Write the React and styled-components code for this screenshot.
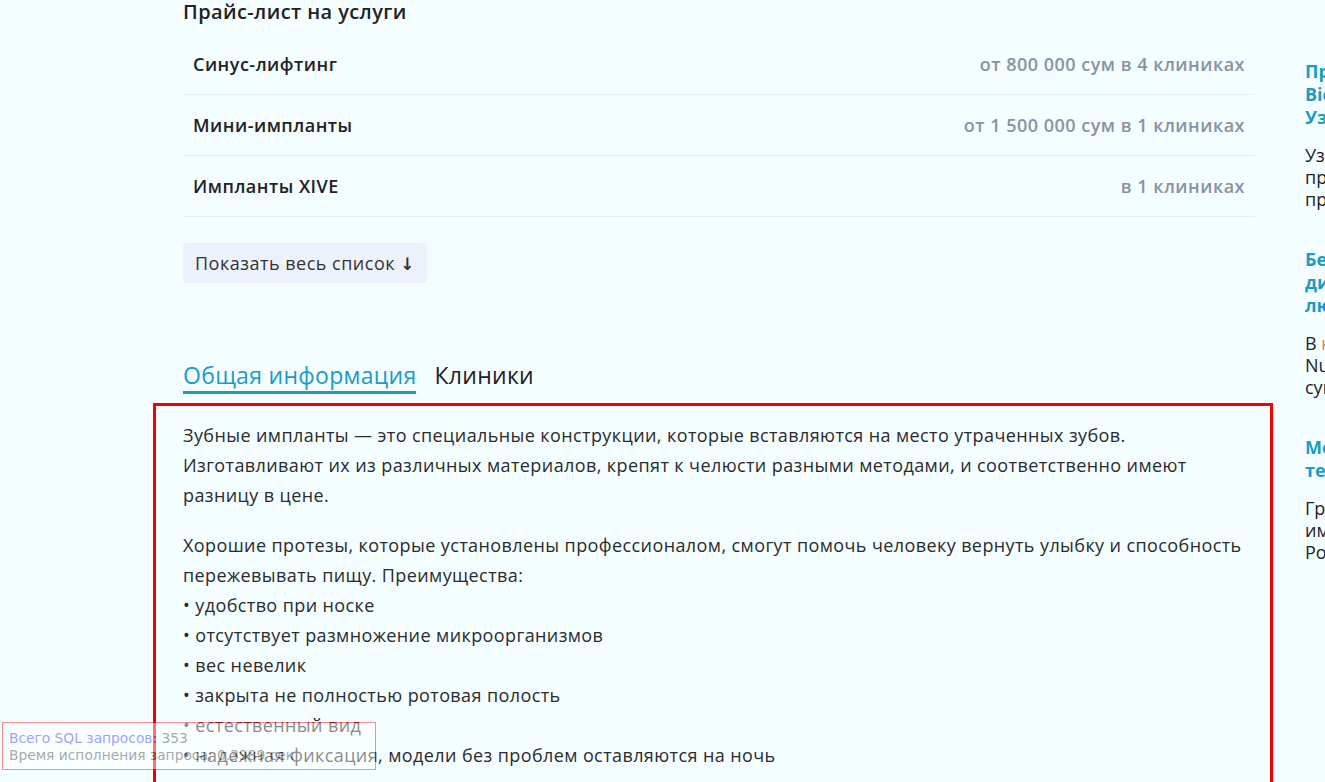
import React from "react";
import styled, { createGlobalStyle } from "styled-components";

const GlobalStyle = createGlobalStyle`
  html, body {
    margin: 0;
    padding: 0;
    background: #f4fdff;
    overflow: hidden;
  }
  body {
    font-family: "Open Sans", "Noto Sans", sans-serif;
    color: #2b2b2b;
  }
`;

const Page = styled.div`
  display: flex;
  align-items: flex-start;
  gap: 32px;
  padding-left: 153px;
  width: 1500px;
  height: 782px;
  overflow: hidden;
`;

const Main = styled.div`
  width: 1120px;
  flex-shrink: 0;
`;

const PriceSection = styled.section`
  margin-left: 30px;
  width: 1072px;
`;

const PriceTitle = styled.h2`
  margin: 0;
  height: 34px;
  font-size: 20px;
  font-weight: 600;
  line-height: 24px;
  letter-spacing: 0.4px;
  color: #222;
`;

const PriceRow = styled.div`
  display: flex;
  justify-content: space-between;
  align-items: center;
  padding: 0 10px 1px;
  box-sizing: border-box;
  height: 61px;
  border-bottom: 1px solid #e1f1f4;
  font-size: 18px;
  font-weight: 600;
  letter-spacing: 0.5px;
`;

const ServiceName = styled.span`
  color: #222;
`;

const ServicePrice = styled.span`
  color: #8993a0;
`;

const ShowAll = styled.button`
  margin-top: 26px;
  height: 40px;
  padding: 0 13px 0 12px;
  border: none;
  border-radius: 4px;
  background: #edf1fb;
  font-family: inherit;
  font-size: 18px;
  letter-spacing: 0.5px;
  color: #333;
  cursor: pointer;
`;

const Arrow = styled.span`
  font-family: "DejaVu Sans", sans-serif;
  font-size: 17px;
  font-weight: 700;
  letter-spacing: 0;
`;

const Tabs = styled.nav`
  display: flex;
  gap: 18px;
  margin: 78px 0 0 30px;
  height: 42px;
`;

const Tab = styled.a`
  font-size: 23px;
  line-height: 28px;
  height: 30px;
  letter-spacing: 0.3px;
  color: ${(p) => (p.$active ? "#1a9cc5" : "#222")};
  border-bottom: 3px solid ${(p) => (p.$active ? "#1a9cc5" : "transparent")};
  cursor: pointer;
`;

const InfoBox = styled.div`
  border: 3px solid #f40000;
  border-bottom: none;
  padding: 14px 0 60px 27px;
  font-size: 18px;
  line-height: 30px;
  letter-spacing: 0.4px;
  color: #2b2b2b;
  p {
    margin: 0 0 20px;
  }
`;

const Aside = styled.aside`
  width: 320px;
  flex-shrink: 0;
  padding-top: 60px;
`;

const Article = styled.div`
  margin-bottom: 38px;
`;

const ArticleTitle = styled.a`
  display: block;
  font-size: 18px;
  font-weight: 700;
  line-height: 23px;
  color: #1a9cc5;
  margin-bottom: 15px;
`;

const ArticleText = styled.p`
  margin: 0;
  font-size: 18px;
  line-height: 22px;
  color: #222;
  span {
    color: #d98a3a;
  }
`;

const Debug = styled.div`
  position: fixed;
  left: 2px;
  top: 722px;
  width: 374px;
  height: 48px;
  padding: 7px 6px;
  box-sizing: border-box;
  border: 1px solid #f00;
  background: #fff;
  opacity: 0.45;
  font-family: "DejaVu Sans", Verdana, sans-serif;
  font-size: 13.8px;
  line-height: 17px;
  color: #444;
  b {
    font-weight: 400;
    color: #33f;
  }
`;

const prices = [
  { name: "Синус-лифтинг", price: "от 800 000 сум в 4 клиниках" },
  { name: "Мини-импланты", price: "от 1 500 000 сум в 1 клиниках" },
  { name: "Импланты XIVE", price: "в 1 клиниках" },
];

const articles = [
  {
    title: ["Протезирование", "Bicon в", "Узбекистане"],
    text: ["Узнайте о", "преимуществах", "протезов"],
  },
  {
    title: ["Бесплатная", "диагностика для", "людей"],
    text: ["В клинике", "Nuraffa", "существует"],
    accent: true,
  },
  {
    title: ["Можно ли", "теперь"],
    text: ["Граждане", "имеют", "России"],
  },
];

export default function App() {
  return (
    <>
      <GlobalStyle />
      <Page>
        <Main>
          <PriceSection>
            <PriceTitle>Прайс-лист на услуги</PriceTitle>
            {prices.map((p) => (
              <PriceRow key={p.name}>
                <ServiceName>{p.name}</ServiceName>
                <ServicePrice>{p.price}</ServicePrice>
              </PriceRow>
            ))}
            <ShowAll>
              Показать весь список <Arrow>↓</Arrow>
            </ShowAll>
          </PriceSection>

          <Tabs>
            <Tab $active>Общая информация</Tab>
            <Tab>Клиники</Tab>
          </Tabs>

          <InfoBox>
            <p>
              Зубные импланты — это специальные конструкции, которые вставляются на место утраченных зубов.
              <br />
              Изготавливают их из различных материалов, крепят к челюсти разными методами, и соответственно имеют
              <br />
              разницу в цене.
            </p>
            <p>
              Хорошие протезы, которые установлены профессионалом, смогут помочь человеку вернуть улыбку и способность
              <br />
              пережевывать пищу. Преимущества:
              <br />• удобство при носке
              <br />• отсутствует размножение микроорганизмов
              <br />• вес невелик
              <br />• закрыта не полностью ротовая полость
              <br />• естественный вид
              <br />• надежная фиксация, модели без проблем оставляются на ночь
            </p>
          </InfoBox>
        </Main>

        <Aside>
          {articles.map((a) => (
            <Article key={a.title.join(" ")}>
              <ArticleTitle>
                {a.title.map((line, i) => (
                  <React.Fragment key={i}>
                    {i > 0 && <br />}
                    {line}
                  </React.Fragment>
                ))}
              </ArticleTitle>
              <ArticleText>
                {a.text.map((line, i) => (
                  <React.Fragment key={i}>
                    {i > 0 && <br />}
                    {a.accent && i === 0 ? (
                      <>
                        В <span>клинике</span>
                      </>
                    ) : (
                      line
                    )}
                  </React.Fragment>
                ))}
              </ArticleText>
            </Article>
          ))}
        </Aside>
      </Page>
      <Debug>
        <b>Всего SQL запросов:</b> 353
        <br />
        Время исполнения запроса: 0.3989 сек
      </Debug>
    </>
  );
}
